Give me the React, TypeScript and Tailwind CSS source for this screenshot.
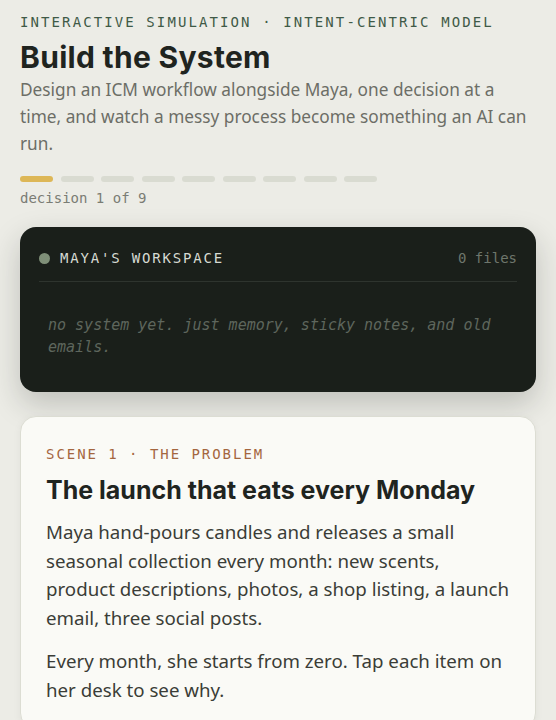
import React from "react";

const steps = Array.from({ length: 9 }, (_, i) => i);

export default function App() {
  return (
    <div className="min-h-[720px] bg-[#ecece6] px-5 pt-3 pb-10 font-['Inter','Noto_Sans',sans-serif]">
      <div className="text-[14px] leading-5 tracking-[0.15em] text-[#3f5a47] font-['DejaVu_Sans_Mono','Liberation_Mono',monospace]">
        INTERACTIVE SIMULATION · INTENT-CENTRIC MODEL
      </div>
      <h1 className="mt-[7px] text-[30px] leading-[36px] font-bold tracking-[0.01em] text-[#1f241f]">
        Build the System
      </h1>
      <p className="mt-[1px] text-[17.25px] leading-[27px] text-[#6c6e66] font-['Noto_Sans','Open_Sans',sans-serif]">
        Design an ICM workflow alongside Maya, one decision at a time, and watch a messy process become something an AI can run.
      </p>

      <div className="mt-[19px] flex gap-[7.5px]">
        {steps.map((i) => (
          <div
            key={i}
            className={
              i === 0
                ? "h-[6px] w-[33px] rounded-full bg-[#ddb757]"
                : "h-[6px] w-[33px] rounded-full bg-[#d9dbd1]"
            }
          />
        ))}
      </div>
      <div className="mt-[6px] text-[14px] leading-5 text-[#7a7c74] font-['DejaVu_Sans_Mono','Liberation_Mono',monospace]">
        decision 1 of 9
      </div>

      <div className="mt-[19px] rounded-[16px] bg-[#1a1f1a] px-[19px] pt-[21px] pb-[34px] shadow-[0_12px_30px_rgba(30,35,30,0.22)] font-['DejaVu_Sans_Mono','Liberation_Mono',monospace]">
        <div className="flex items-center justify-between pb-[13px] border-b border-[#2e342e]">
          <div className="flex items-center gap-[10px]">
            <span className="h-[11px] w-[11px] rounded-full bg-[#7f8f78]" />
            <span className="text-[14px] leading-5 tracking-[0.13em] text-[#d6dad2]">
              MAYA'S WORKSPACE
            </span>
          </div>
          <span className="text-[14px] leading-5 text-[#6e766c]">0 files</span>
        </div>
        <p className="mt-[32px] px-[9px] text-[15px] leading-[22px] italic text-[#5e665d]">
          no system yet. just memory, sticky notes, and old emails.
        </p>
      </div>

      <div className="mt-[24px] rounded-[16px] border border-[#dcddd3] bg-[#fafaf6] px-[25px] pt-[27px] pb-[24px] shadow-[0_2px_8px_rgba(30,35,30,0.05)]">
        <div className="text-[14px] leading-5 tracking-[0.14em] text-[#a4663f] font-['DejaVu_Sans_Mono','Liberation_Mono',monospace]">
          SCENE 1 · THE PROBLEM
        </div>
        <h2 className="mt-[11px] text-[25px] leading-[30px] font-bold text-[#1f241f]">
          The launch that eats every Monday
        </h2>
        <div className="font-['Noto_Sans','Open_Sans',sans-serif] text-[18.7px] leading-[28.5px] text-[#3a3d37]">
          <p className="mt-[13px]">
            Maya hand-pours candles and releases a small seasonal collection every month: new scents, product descriptions, photos, a shop listing, a launch email, three social posts.
          </p>
          <p className="mt-[15px]">
            Every month, she starts from zero. Tap each item on her desk to see why.
          </p>
        </div>
      </div>
    </div>
  );
}
